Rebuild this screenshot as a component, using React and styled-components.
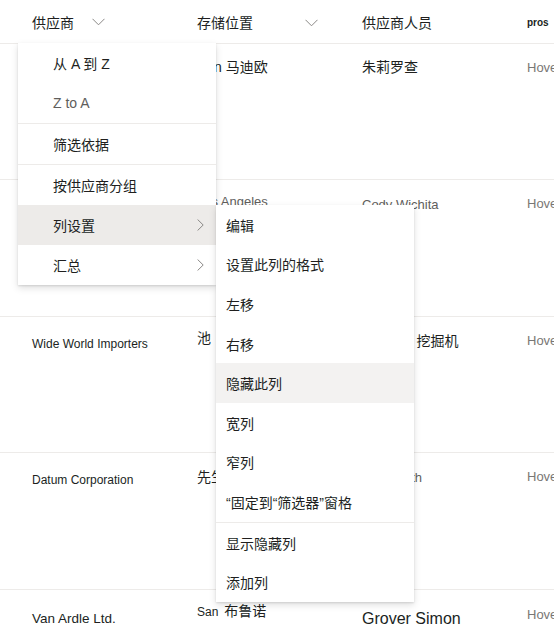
import React from 'react';
import styled, { createGlobalStyle } from 'styled-components';

const GlobalStyle = createGlobalStyle`
  html, body {
    margin: 0;
    padding: 0;
    background: #ffffff;
  }
  body {
    font-family: 'Liberation Sans', 'Noto Sans CJK SC', sans-serif;
    color: #201f1e;
    overflow: hidden;
  }
`;

const Page = styled.div`
  position: relative;
  width: 554px;
  height: 631px;
  overflow: hidden;
`;

const Row = styled.div`
  display: grid;
  grid-template-columns: 165px 165px 165px 1fr;
  padding-left: 32px;
  height: ${(props) => props.h}px;
  box-sizing: border-box;
  border-bottom: 1px solid #edebe9;
  white-space: nowrap;
  overflow: hidden;
`;

const HeadCell = styled.div`
  display: flex;
  align-items: center;
  gap: 18px;
  height: 44px;
  font-size: 14px;
  color: #201f1e;
`;

const Pros = styled.span`
  font-size: 10px;
  font-weight: bold;
  margin-top: 1px;
`;

const Cell = styled.div`
  padding-top: ${(props) => props.top}px;
  font-size: ${(props) => props.size || 13}px;
  line-height: 20px;
  color: ${(props) => (props.muted ? '#605e5c' : '#201f1e')};
`;

const Hove = styled(Cell)`
  color: #797775;
`;

const Small = styled.span`
  font-size: 12px;
  margin-right: 6px;
`;

const Menu = styled.div`
  position: absolute;
  left: ${(props) => props.left};
  top: ${(props) => props.top}px;
  width: 198px;
  background: #ffffff;
  box-shadow: 0 3.2px 7.2px rgba(0, 0, 0, 0.13), 0 0.6px 1.8px rgba(0, 0, 0, 0.11);
  z-index: ${(props) => props.z || 2};
`;

const Item = styled.div`
  position: relative;
  display: flex;
  align-items: center;
  justify-content: space-between;
  height: ${(props) => props.h || 40}px;
  padding: 0 12px 0 ${(props) => props.indent}px;
  font-size: 14px;
  color: ${(props) => (props.muted ? '#605e5c' : '#201f1e')};
  background: ${(props) => props.bg || 'transparent'};
`;

const Divider = styled.div`
  height: 1px;
  background: #edebe9;
`;

const ChevronDown = () => (
  <svg width="13" height="8" viewBox="0 0 13 8" fill="none">
    <path d="M0.5 0.8 L6.5 6.8 L12.5 0.8" stroke="#8a8886" strokeWidth="1" />
  </svg>
);

const ChevronRight = () => (
  <svg width="7" height="12" viewBox="0 0 7 12" fill="none">
    <path d="M0.6 0.5 L6.2 6 L0.6 11.5" stroke="#8a8886" strokeWidth="1" />
  </svg>
);

const rows = [
  {
    h: 136,
    cells: [
      { text: '', top: 14 },
      { text: 'San 马迪欧', top: 13, size: 14 },
      { text: '朱莉罗查', top: 13, size: 14 },
    ],
  },
  {
    h: 137,
    cells: [
      { text: '', top: 16 },
      { text: 'Los Angeles', top: 12, muted: true },
      { text: 'Cody Wichita', top: 15, muted: true },
    ],
  },
  {
    h: 136,
    cells: [
      { text: 'Wide World Importers', top: 17, size: 12 },
      { text: '池', top: 11, size: 14 },
      { text: '丹尼尔 · 挖掘机', top: 14, size: 14 },
    ],
  },
  {
    h: 137,
    cells: [
      { text: 'Datum Corporation', top: 17, size: 12 },
      { text: '先生', top: 14, size: 14 },
      { text: 'Ken Smith', top: 15, muted: true },
    ],
  },
  {
    h: 80,
    cells: [
      { text: 'Van Ardle Ltd.', top: 19, size: 13.5 },
      { text: <><Small>San</Small>布鲁诺</>, top: 11, size: 14 },
      { text: 'Grover Simon', top: 19, size: 16 },
    ],
  },
];

const subItems = [
  '编辑',
  '设置此列的格式',
  '左移',
  '右移',
  '隐藏此列',
  '宽列',
  '窄列',
  '“固定到“筛选器”窗格',
];

const App = () => {
  return (
    <Page>
      <GlobalStyle />
      <Row h={44}>
        <HeadCell>
          供应商 <ChevronDown />
        </HeadCell>
        <HeadCell>
          存储位置
          <span style={{ marginLeft: 34 }}>
            <ChevronDown />
          </span>
        </HeadCell>
        <HeadCell>供应商人员</HeadCell>
        <HeadCell>
          <Pros>pros</Pros>
        </HeadCell>
      </Row>
      {rows.map((row, index) => (
        <Row key={index} h={row.h}>
          {row.cells.map((cell, i) => (
            <Cell key={i} top={cell.top} size={cell.size} muted={cell.muted}>
              {cell.text}
            </Cell>
          ))}
          <Hove top={index === 4 ? 15 : 14}>Hover</Hove>
        </Row>
      ))}

      <Menu left="18px" top={43}>
        <Item indent={35}>从 A 到 Z</Item>
        <Item indent={35} muted>
          Z to A
        </Item>
        <Divider />
        <Item indent={35}>筛选依据</Item>
        <Divider />
        <Item indent={35}>按供应商分组</Item>
        <Item indent={35} bg="#edebe9">
          列设置
          <ChevronRight />
          <Menu left="100%" top={0} z={3}>
            {subItems.map((label) => (
              <Item
                key={label}
                indent={10}
                h={39.6}
                bg={label === '隐藏此列' ? '#f3f2f1' : undefined}
              >
                {label}
              </Item>
            ))}
            <Divider />
            <Item indent={10} h={39.6}>显示隐藏列</Item>
            <Item indent={10} h={39.6}>添加列</Item>
          </Menu>
        </Item>
        <Item indent={35}>
          汇总
          <ChevronRight />
        </Item>
      </Menu>
    </Page>
  );
};

export default App;
